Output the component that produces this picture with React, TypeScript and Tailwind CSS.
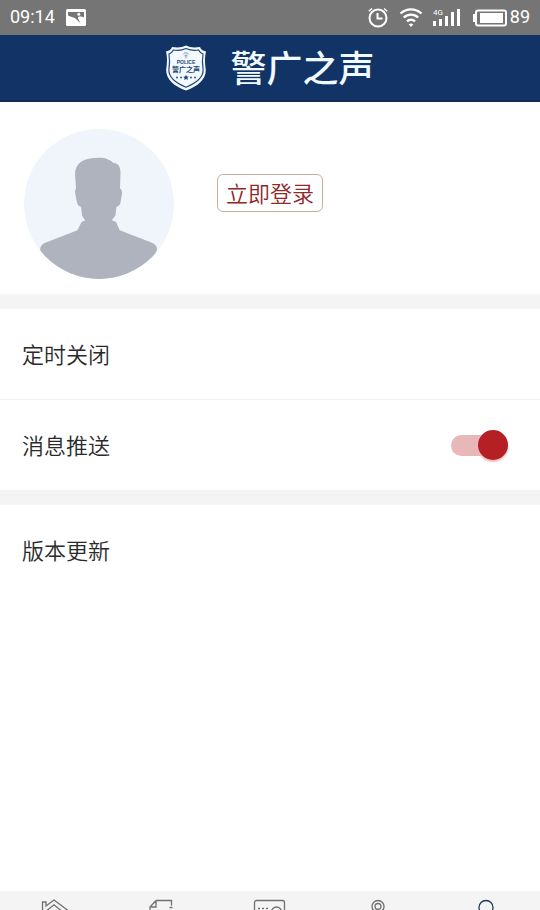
import type { ReactNode } from 'react';

function StatusBar() {
  return (
    <div className="flex h-[35px] items-center bg-[#757575] px-[10px] font-[Roboto,sans-serif] text-[18px] leading-none font-normal text-white">
      <span className="pb-px">09:14</span>
      <svg className="ml-[10px]" width="22" height="18" viewBox="0 0 22 18" aria-label="Picture">
        <rect x="1" y="0" width="20" height="17" rx="1.500" fill="#fff" />
        <path d="M3 3h16v5.500c-1.500-1-3-1.300-4.500-1-1.500.2-1.800 1-1.300 2.200l2.200 4.500-4.600-4.500C9 8 6.500 8.300 3 6.500z" fill="#757575" />
        <circle cx="13.800" cy="5.300" r="1.500" fill="#fff" />
      </svg>
      <div className="ml-auto flex items-center">
        <svg width="22" height="22" viewBox="0 0 22 22" fill="none" stroke="#fff" strokeWidth="2" aria-label="Alarm">
          <circle cx="11" cy="11" r="8.500" />
          <path d="M10.500 6v5.500h5" />
          <path d="M1.800 4.200 5 1.500M20.200 4.200 17 1.500" strokeWidth="1.500" />
        </svg>
        <svg className="ml-[10px]" width="24" height="20" viewBox="0 0 24 20" fill="none" stroke="#fff" strokeWidth="2.400" aria-label="Wi-Fi">
          <path d="M1.500 5.500a15.300 15.300 0 0 1 21 0" />
          <path d="M4.800 9.500a10.400 10.400 0 0 1 14.400 0" />
          <path d="M8 13.400a5.800 5.800 0 0 1 8 0" />
          <path d="M12 19 9.700 16.500a3.600 3.600 0 0 1 4.600 0z" fill="#fff" stroke="none" />
        </svg>
        <svg className="ml-[10px]" width="30" height="20" viewBox="0 0 30 20" fill="#fff" aria-label="Signal">
          <text x="0" y="7" fontSize="8">4G</text>
          <rect x="0" y="13" width="3" height="5" />
          <rect x="6" y="11" width="3" height="7" />
          <rect x="12" y="8" width="3" height="10" />
          <rect x="18" y="4" width="3" height="14" />
          <rect x="24" y="1" width="3" height="17" />
        </svg>
        <svg className="ml-[9px]" width="36" height="18" viewBox="0 0 36 18" aria-label="Battery">
          <path d="M4 6H2v6h2" fill="none" stroke="#fff" strokeWidth="2" />
          <rect x="4" y="1.500" width="30" height="15" rx="2" fill="none" stroke="#fff" strokeWidth="2" />
          <rect x="8" y="4" width="23" height="10" fill="#fff" />
        </svg>
        <span className="ml-[2px] pb-px">89</span>
      </div>
    </div>
  );
}

function ShieldLogo() {
  return (
    <svg width="42" height="46" viewBox="0 0 42 46" aria-label="Police shield">
      <path
        d="M21 .5c4 2 8 2.300 14 1.500 1 2.500 2.500 3.800 6 4.500-1.300 6-1.300 10-.2 18.500C41 35 32 41.500 21 45.500 10 41.500 1 35 1.200 25 2.300 16.500 2.300 12.500 1 6.500c3.500-.7 5-2 6-4.500 6 .8 10 .5 14-1.500z"
        fill="#f2fafd"
      />
      <path
        d="M21 3.500c4 1.800 7.800 2.200 12.600 1.500.9 1.900 2.200 3.200 4.400 4-.9 5.500-.8 9.500.1 16 .1 7.500-7.300 13.200-17.100 17.200C11.200 38.200 3.800 32.500 3.900 25c.9-6.500 1-10.500.1-16 2.200-.8 3.500-2.100 4.400-4 4.800.7 8.600.3 12.600-1.500z"
        fill="none"
        stroke="#294677"
        strokeWidth="1.200"
      />
      <path d="M18 9.500a3.500 3.500 0 0 1 6 0M19.300 11a2.200 2.200 0 0 1 3.400 0M21 10.500v3" fill="none" stroke="#6b83a8" strokeWidth=".8" />
      <g fill="#294677" textAnchor="middle">
        <text x="21" y="18.500" fontSize="5" className="font-['Liberation_Sans',sans-serif] font-bold">POLICE</text>
        <text x="21" y="27" fontSize="7" className="font-['Noto_Sans_CJK_SC',sans-serif] font-bold">警广之声</text>
      </g>
      <g fill="#294677">
        <path d="m21 29.800.9 1.800 1.900.2-1.400 1.300.4 2-1.800-1-1.800 1 .4-2-1.400-1.300 1.900-.2z" />
        <circle cx="12" cy="32.500" r=".9" />
        <circle cx="16" cy="32.500" r=".9" />
        <circle cx="26" cy="32.500" r=".9" />
        <circle cx="30" cy="32.500" r=".9" />
      </g>
    </svg>
  );
}

function Avatar() {
  return (
    <svg className="shrink-0" width="150" height="150" viewBox="0 0 150 150" role="img" aria-label="Avatar">
      <clipPath id="avatar-clip">
        <circle cx="75" cy="75" r="75" />
      </clipPath>
      <circle cx="75" cy="75" r="75" fill="#eff5fa" />
      <path
        clipPath="url(#avatar-clip)"
        fill="#aeb3bd"
        d="M75 28.700c7 0 11 2 14.500 5.300 5 .2 7 4 7 9.500L96 59.500c1.800 1 2.300 3 2 5.500l-1.500 8.500c-.5 2.500-2 4-4 4.200L91.500 86c-.5 2-3 3.500-3.500 5.500L92 92.700l3.700 8.600 31 12c4 1.700 6.300 3.700 6.300 6.700 0 1.500-1 3-2 4.500V150H18v-25.500c-1-1.500-1.800-3-1.800-4.500 0-3 2.300-5 6.300-6.700l31-12L57.500 93l3.500-1.500c-.5-2-2.700-3.500-3-5.500l-1-8.300c-2.200-.2-3.500-1.700-4-4.200L51.300 65c-.3-2.500-.2-4.500.7-5.500l-1-14C51 34 59 28.700 75 28.700z"
      />
    </svg>
  );
}

function Row({ children }: { children: ReactNode }) {
  return <div className="flex h-[90px] items-center pr-8 pl-[22px]">{children}</div>;
}

function Divider() {
  return <div className="h-[15px] bg-[#f4f4f4]" />;
}

const tabs = [
  {
    label: '首页',
    icon: <path d="M6.500 12V3H10v4l8-6 14 10.500M9 13l9-7.200L28 14M9 13v18h18V13" />,
  },
  {
    label: '资讯',
    icon: <path d="M12 1.500h15.500v5M28.500 8.500h-3M12 1.500 6 8v23h22V12M12 1.500V8H7" />,
  },
  {
    label: '电台',
    icon: (
      <>
        <rect x="2.500" y="1.500" width="30" height="24" rx="2" />
        <path d="M6 9.500h2M10 9.500h2M14 9.500h2" />
        <circle cx="24.500" cy="13" r="5" />
      </>
    ),
  },
  {
    label: '路况',
    icon: (
      <>
        <circle cx="18" cy="7.500" r="6" />
        <circle cx="18" cy="7.500" r="3" />
        <path d="M12.500 10 18 24l5.500-14" />
      </>
    ),
  },
  {
    label: '我的',
    active: true,
    icon: (
      <>
        <circle cx="18" cy="8.500" r="7" />
        <path d="M4 31c0-9 6-13 14-13s14 4 14 13" />
      </>
    ),
  },
];

// The bar runs past the bottom of the screen, only its top strip shows
function TabBar() {
  return (
    <nav className="mt-auto grid h-[19px] shrink-0 grid-cols-5 overflow-hidden bg-[#f4f4f4]">
      {tabs.map((tab) => (
        <button
          key={tab.label}
          type="button"
          aria-label={tab.label}
          className={tab.active ? 'flex justify-center pt-2 text-[#24375a]' : 'flex justify-center pt-2 text-[#707070]'}
        >
          <svg className="shrink-0" width="36" height="36" viewBox="0 0 36 36" fill="none" stroke="currentColor" strokeWidth="1.300">
            {tab.icon}
          </svg>
        </button>
      ))}
    </nav>
  );
}

export default function App() {
  return (
    <div className="flex h-screen flex-col overflow-hidden bg-white font-['Noto_Sans_CJK_SC',sans-serif] text-[22px] leading-[30px] font-[350] text-[#2a2a2a]">
      <StatusBar />
      <header className="flex h-[67px] items-center justify-center gap-[23px] border-b-2 border-[#142a50] bg-[#113366]">
        <ShieldLogo />
        <h1 className="pb-[3px] text-[36px] leading-none font-medium text-[#f0faff]">警广之声</h1>
      </header>

      <section className="flex h-[192px] items-start gap-[43px] px-6 pt-[27px]">
        <Avatar />
        <button
          type="button"
          className="mt-[45px] h-[38px] rounded-md border border-[#c0b09c] px-2 pb-[2px] leading-none whitespace-nowrap text-[#8f2828]"
        >
          立即登录
        </button>
      </section>

      <Divider />
      <button type="button" className="border-b border-[#f0f0f0] text-left">
        <Row>
          <span className="pb-[3px]">定时关闭</span>
        </Row>
      </button>
      <Row>
        <label htmlFor="push" className="grow pb-[3px]">消息推送</label>
        <input
          id="push"
          type="checkbox"
          defaultChecked
          className="relative h-[21px] w-[57px] appearance-none rounded-full bg-[#d8d8d8] before:absolute before:-top-[5px] before:left-0 before:size-[30px] before:rounded-full before:bg-[#999] checked:bg-[#e8b8b9] checked:before:left-[27px] checked:before:bg-[#b52025] checked:before:shadow-[0_2px_2px_#e8b8b9]"
        />
      </Row>
      <Divider />
      <button type="button" className="text-left">
        <Row>
          <span className="pb-[3px]">版本更新</span>
        </Row>
      </button>

      <TabBar />
    </div>
  );
}
